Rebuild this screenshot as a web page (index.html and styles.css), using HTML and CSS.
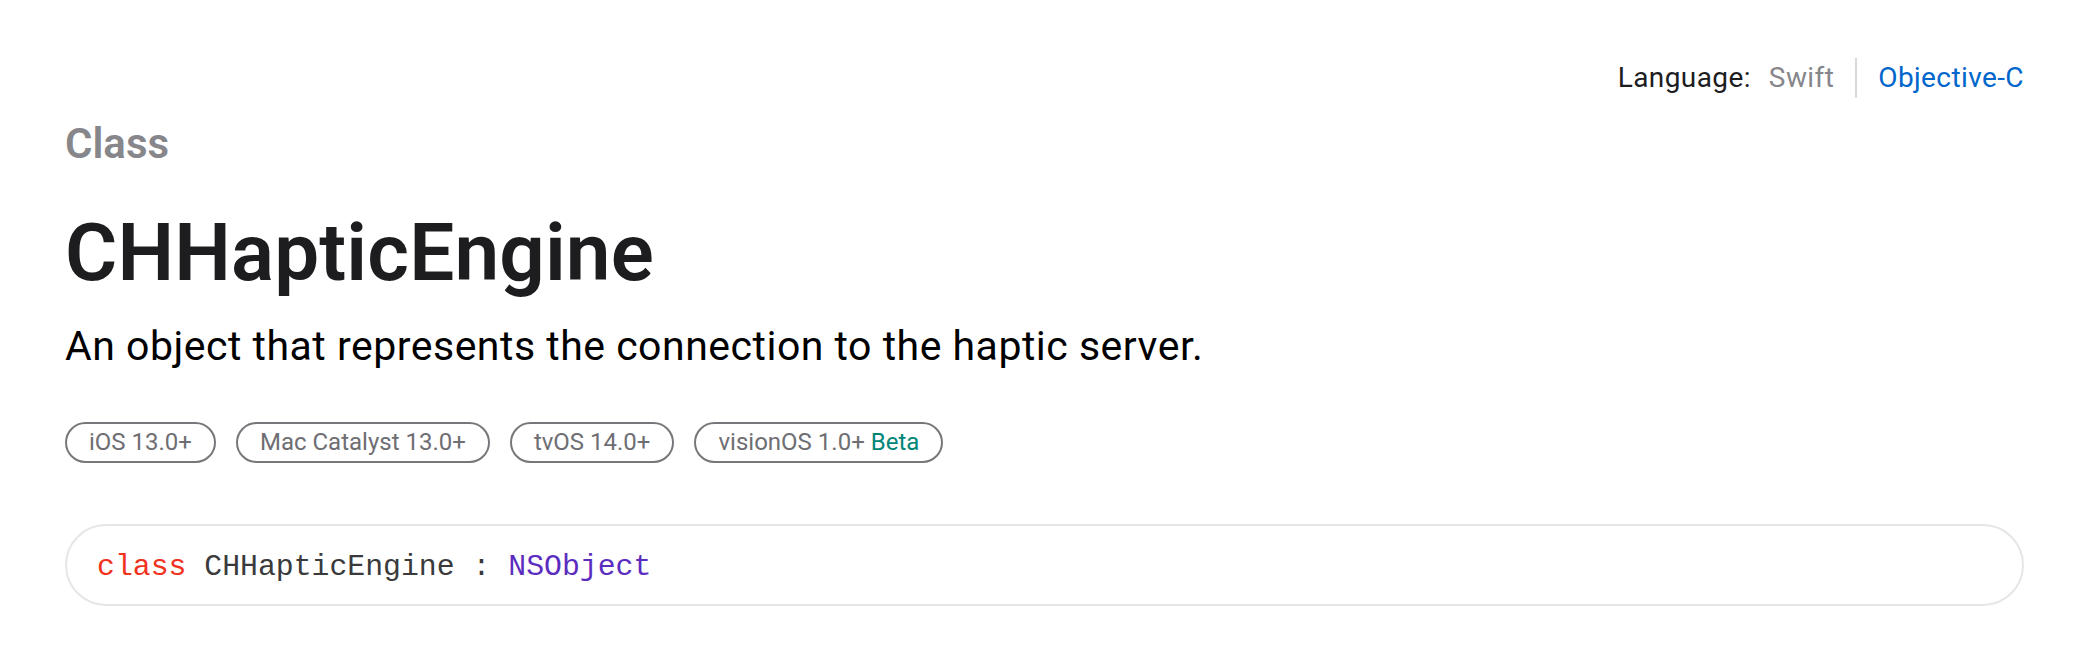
FILE: index.html
```html
<!DOCTYPE html>
<html lang="en">
<head>
<meta charset="utf-8">
<title>CHHapticEngine</title>
<link rel="stylesheet" href="styles.css">
</head>
<body>
<main class="page">
  <div class="lang-row">
    <span class="lang-label">Language:</span>
    <span class="lang-option lang-inactive">Swift</span>
    <span class="lang-sep"></span>
    <span class="lang-option lang-active">Objective-C</span>
  </div>
  <div class="eyebrow">Class</div>
  <h1 class="title">CHHapticEngine</h1>
  <p class="abstract">An object that represents the connection to the haptic server.</p>
  <ul class="badges">
    <li class="badge">iOS 13.0+</li>
    <li class="badge">Mac Catalyst 13.0+</li>
    <li class="badge">tvOS 14.0+</li>
    <li class="badge">visionOS 1.0+ <span class="beta">Beta</span></li>
  </ul>
  <div class="declaration"><code><span class="kw">class</span> CHHapticEngine : <span class="type">NSObject</span></code></div>
</main>
</body>
</html>
```
FILE: styles.css
```css
html, body {
  margin: 0;
  padding: 0;
  background: #ffffff;
}

body {
  font-family: Roboto, "Liberation Sans", Arial, sans-serif;
  color: #1d1d1f;
}

.page {
  padding: 58px 63px 0 65px;
}

.lang-row {
  display: flex;
  justify-content: flex-end;
  align-items: center;
  height: 40px;
  font-size: 28px;
  line-height: 40px;
  letter-spacing: 0.4px;
}

.lang-label {
  color: #1d1d1f;
  margin-right: 18px;
}

.lang-inactive {
  color: #86868b;
}

.lang-sep {
  width: 2px;
  height: 40px;
  background: #d9d9dc;
  margin: 0 21px;
}

.lang-active {
  color: #0066cc;
}

.eyebrow {
  margin-top: 21px;
  font-size: 42px;
  line-height: 50px;
  font-weight: 600;
  color: #86868b;
}

.title {
  margin: 39px 0 0;
  font-size: 80px;
  line-height: 90px;
  font-weight: 600;
  color: #1d1d1f;
  letter-spacing: 0.15px;
}

.abstract {
  margin: 23px 0 0;
  font-size: 41px;
  line-height: 50px;
  color: #000000;
  letter-spacing: 0.5px;
}

.badges {
  list-style: none;
  margin: 51px 0 0;
  padding: 0;
  display: flex;
  gap: 20px;
}

.badge {
  border: 2px solid #77777b;
  border-radius: 999px;
  padding: 0 22px;
  font-size: 24px;
  line-height: 37px;
  color: #6e6e73;
}

.beta {
  color: #008577;
}

.declaration {
  margin-top: 61px;
  border: 2px solid #e6e6e6;
  border-radius: 999px;
  padding: 24px 30px 19px;
  font-family: "Liberation Mono", "DejaVu Sans Mono", monospace;
  font-size: 29.8px;
  line-height: 35px;
  color: #3a3a3c;
}

.declaration code {
  font-family: inherit;
}

.kw {
  color: #f0321e;
}

.type {
  color: #5b2dbf;
}
```
